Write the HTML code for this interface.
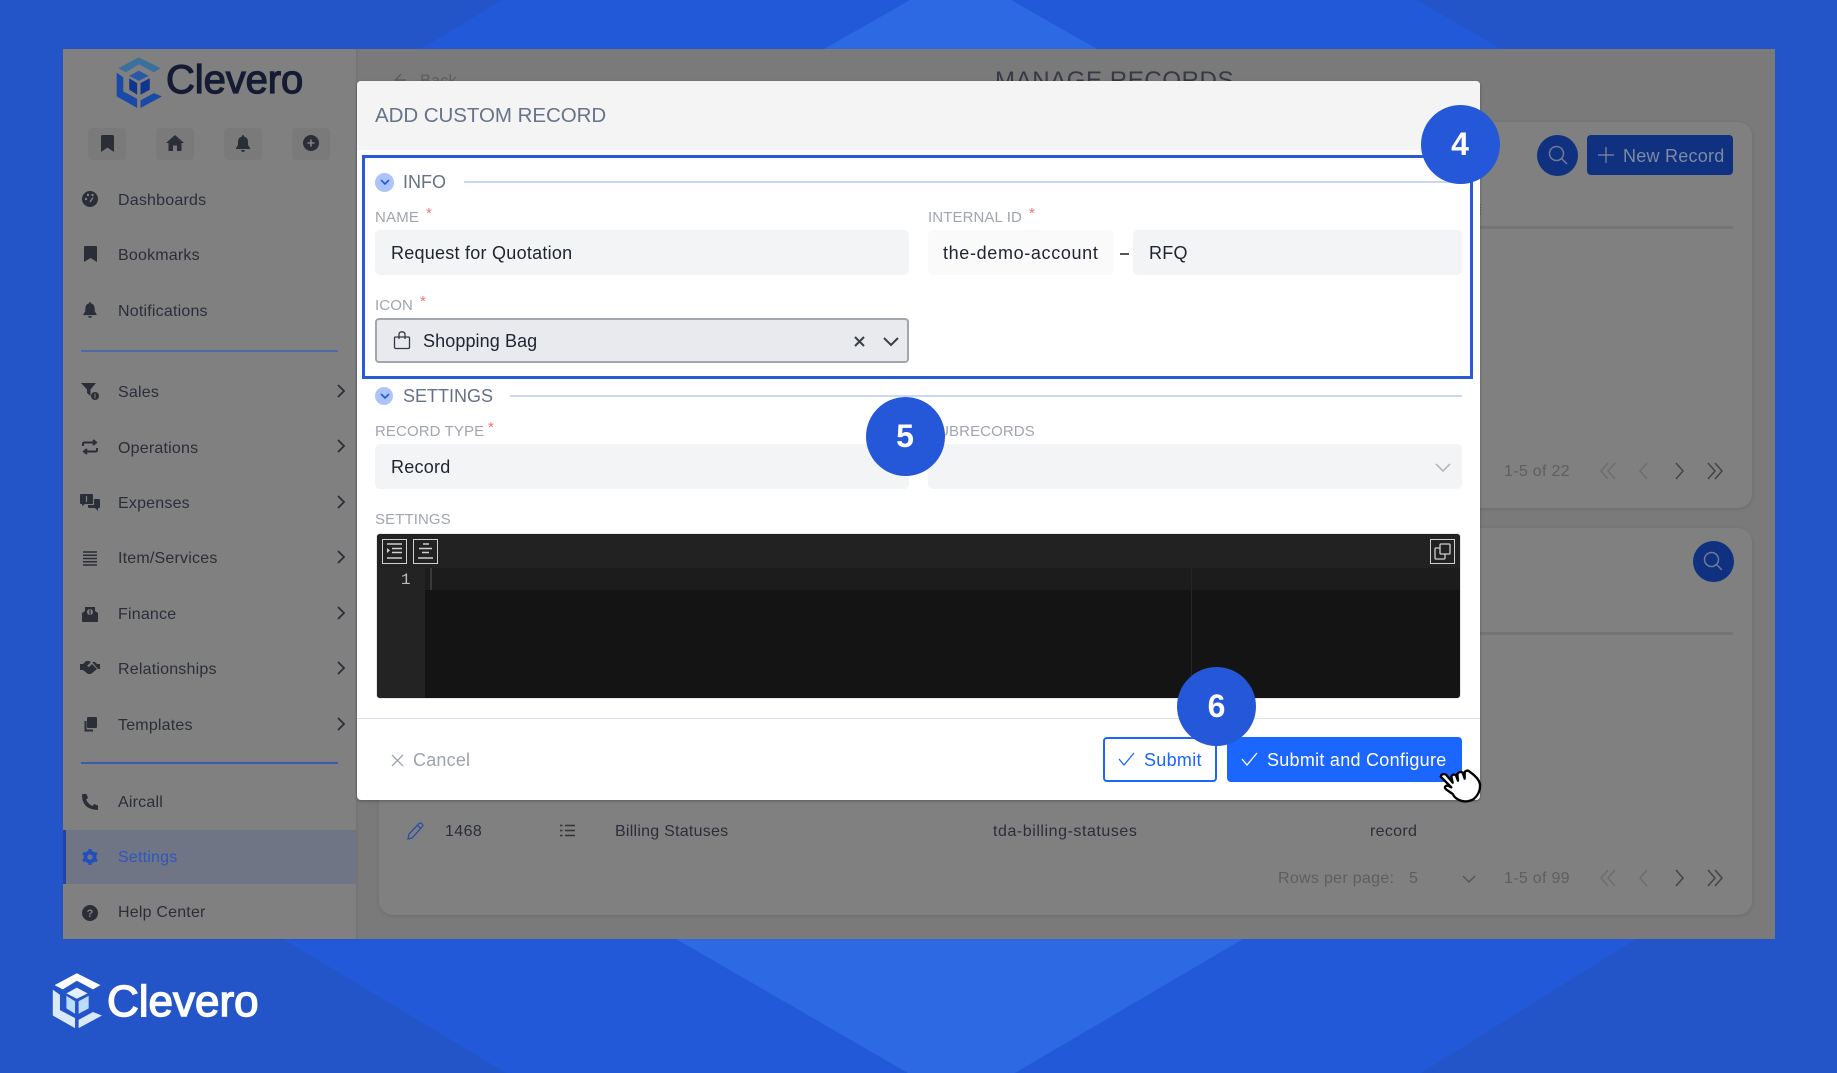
<!DOCTYPE html>
<html><head><meta charset="utf-8"><title>Clevero</title>
<style>
*{box-sizing:border-box}
html,body{margin:0;padding:0;width:1837px;height:1073px;overflow:hidden;background:#2455c8;font-family:"Liberation Sans",sans-serif}
.a{position:absolute}
.t{position:absolute;white-space:nowrap;line-height:1}
.nav{font-size:16px;letter-spacing:.2px;color:#2a2e37;left:118px}
.lab{font-size:15px;color:#a1a5ad;letter-spacing:.1px}
.req{font-size:15px;color:#f87171}
.inp{position:absolute;background:#f3f4f6;border-radius:5px;height:45px}
.val{font-size:18px;color:#1f2430;letter-spacing:.25px}
.circ{position:absolute;width:79px;height:79px;border-radius:50%;background:#2558d8;color:#fff;font-weight:bold;font-size:32px;text-align:center;line-height:79px;z-index:20}
.sec{font-size:18px;color:#657185;letter-spacing:0}
.pg{font-size:16px;color:#5e5e5e;letter-spacing:.3px}
.tb{position:absolute;border:1.5px solid #d0d0d0;width:25px;height:25px}
svg{position:absolute;overflow:visible}
.ic{fill:#2a2e37}
.sb{position:absolute;background:#7a7a7a;border-radius:4px;width:38px;height:32px;top:128px}
</style></head><body>

<svg style="left:0;top:0" width="1837" height="1073">
<polygon points="502,0 1417,0 1501,49 1636,939 1421,1073 506,1073 283,939 421,49" fill="#2259d8"/>
<polygon points="910,0 1011,0 1097,49 1243,939 1015,1073 908,1073 676,939 824,49" fill="#2c69e2"/>
</svg>

<!-- app frame -->
<div class="a" style="left:63px;top:49px;width:1712px;height:890px;background:#7a7a7a;overflow:hidden"></div>
<!-- sidebar -->
<div class="a" style="left:63px;top:49px;width:293px;height:890px;background:#808080;box-shadow:1px 0 3px rgba(0,0,0,.08)"></div>

<svg style="left:115px;top:56px" width="48" height="53" viewBox="345 168 145 160">
<polygon points="355,205 417,172 483,205 462,217 417,193 378,217" fill="#3a6f9e"/>
<polygon points="350,218 350,290 412,325 412,297 370,275 370,232" fill="#1a4aa8"/>
<polygon points="422,325 487,290 462,280 422,302" fill="#1a4aa8"/>
<polygon points="417,212 447,228 417,243 388,228" fill="#2a58a8"/>
<polygon points="388,235 412,250 412,285 388,270" fill="#0e3590"/>
<polygon points="422,250 450,235 450,270 422,285" fill="#0e3590"/>
</svg>
<div class="t" style="left:166px;top:60px;font-size:40px;color:#141b33;-webkit-text-stroke:1.200px #141b33;letter-spacing:-.1px">Clevero</div>

<div class="sb" style="left:88px"></div><div class="sb" style="left:156px"></div><div class="sb" style="left:224px"></div><div class="sb" style="left:292px"></div>
<svg style="left:101px;top:135px" width="13" height="17" viewBox="0 0 13 17"><path class="ic" d="M0 1.5Q0 0 1.5 0H11.500Q13 0 13 1.500V17L6.500 12.500L0 17Z"/></svg>
<svg style="left:166px;top:135px" width="18" height="16" viewBox="0 0 18 16"><path class="ic" d="M9 0L18 8H15.500V16H11V10.500H7V16H2.500V8H0Z"/></svg>
<svg style="left:236px;top:135px" width="14" height="17" viewBox="0 0 14 17"><path class="ic" d="M7 0Q8 0 8 1.500Q12 2.500 12 7V10L14 13V14H0V13L2 10V7Q2 2.500 6 1.500Q6 0 7 0ZM5 15H9Q8.500 17 7 17Q5.500 17 5 15Z"/></svg>
<svg style="left:303px;top:135px" width="16" height="16" viewBox="0 0 16 16"><circle class="ic" cx="8" cy="8" r="8"/><path d="M8 4.500V11.500M4.500 8H11.500" stroke="#808080" stroke-width="1.600"/></svg>

<div class="t nav" style="top:193px">Dashboards</div>
<div class="t nav" style="top:248px">Bookmarks</div>
<div class="t nav" style="top:304px">Notifications</div>
<div class="t nav" style="top:385px">Sales</div>
<div class="t nav" style="top:441px">Operations</div>
<div class="t nav" style="top:496px">Expenses</div>
<div class="t nav" style="top:551px">Item/Services</div>
<div class="t nav" style="top:607px">Finance</div>
<div class="t nav" style="top:662px">Relationships</div>
<div class="t nav" style="top:718px">Templates</div>
<div class="t nav" style="top:795px">Aircall</div>
<div class="a" style="left:63px;top:830px;width:293px;height:54px;background:#6f7584;border-left:3px solid #1f45a8"></div>
<div class="t nav" style="top:850px;color:#2c56c0">Settings</div>
<div class="t nav" style="top:905px">Help Center</div>

<div class="a" style="left:81px;top:350px;width:257px;height:2px;background:#4c6aa6"></div>
<div class="a" style="left:81px;top:762px;width:257px;height:1.500px;background:#3a5cae"></div>

<!-- sidebar icons -->
<svg style="left:82px;top:191px" width="16" height="16" viewBox="0 0 16 16"><circle class="ic" cx="8" cy="8" r="8"/><circle cx="4" cy="8" r="1.200" fill="#808080"/><circle cx="6" cy="4" r="1.200" fill="#808080"/><circle cx="10.500" cy="4" r="1.200" fill="#808080"/><path d="M8 11L11 6.500" stroke="#808080" stroke-width="1.500"/></svg>
<svg style="left:83.500px;top:246px" width="13" height="16" viewBox="0 0 13 16"><path class="ic" d="M0 1Q0 0 1 0H12Q13 0 13 1V16L6.500 12L0 16Z"/></svg>
<svg style="left:83px;top:302px" width="14" height="16" viewBox="0 0 14 17"><path class="ic" d="M7 0Q8 0 8 1.500Q12 2.500 12 7V10L14 13V14H0V13L2 10V7Q2 2.500 6 1.500Q6 0 7 0ZM5 15H9Q8.500 17 7 17Q5.500 17 5 15Z"/></svg>
<svg style="left:81px;top:383px" width="18" height="17" viewBox="0 0 18 17"><path class="ic" d="M0 0H15L9.500 6.500V13L6 10V6.500Z"/><circle class="ic" cx="14" cy="13" r="4"/><path d="M14 10.500V15.500" stroke="#808080" stroke-width="1"/></svg>
<svg style="left:82px;top:439px" width="16" height="16" viewBox="0 0 16 16"><path d="M1 7V5Q1 3.500 2.500 3.500H13M11 1L14 3.500L11 6M15 9V11Q15 12.500 13.500 12.500H3M5 10L2 12.500L5 15" fill="none" stroke="#2a2e37" stroke-width="2"/></svg>
<svg style="left:80px;top:494px" width="20" height="17" viewBox="0 0 20 17"><path class="ic" d="M1 0H12Q13 0 13 1V9Q13 10 12 10H5L2 12V10H1Q0 10 0 9V1Q0 0 1 0Z"/><path class="ic" d="M14 5H19Q20 5 20 6V13Q20 14 19 14H18V17L15 14H9Q8 14 8 13V11H14Z"/><path d="M6.500 2V8" stroke="#808080" stroke-width="1.200"/></svg>
<svg style="left:83px;top:551px" width="14" height="15" viewBox="0 0 14 15"><path d="M0 1H14M0 4.250H14M0 7.500H14M0 10.750H14M0 14H14" stroke="#2a2e37" stroke-width="1.500"/></svg>
<svg style="left:82px;top:606px" width="16" height="16" viewBox="0 0 16 16"><path class="ic" d="M0 7L3 5V1H13V5L16 7V15Q16 16 15 16H1Q0 16 0 15Z"/><circle cx="8" cy="6" r="3" fill="#808080"/><path d="M8 3.500V8.500" stroke="#2a2e37" stroke-width="1.200"/></svg>
<svg style="left:80px;top:661px" width="20" height="13" viewBox="0 0 20 13"><path class="ic" d="M0 3H3L6 0H9L11 1L7 5L9 6L12 3L17 8L11 13H8L3 9H0ZM12 1H15L17 3H20V8H18L13 2Z"/></svg>
<svg style="left:83px;top:717px" width="14" height="16" viewBox="0 0 14 16"><path class="ic" d="M5 0H13Q14 0 14 1V10Q14 11 13 11H5Q4 11 4 10V1Q4 0 5 0Z"/><path d="M2.500 4V13.500H10" fill="none" stroke="#2a2e37" stroke-width="2"/></svg>
<svg style="left:82px;top:794px" width="16" height="16" viewBox="0 0 16 16"><path class="ic" d="M1 0L4.500 0L6 4L4 5.500Q6 10 10.500 12L12 10L16 11.500V15Q16 16 15 16Q0 15 0 1Q0 0 1 0Z"/></svg>
<svg style="left:82px;top:849px" width="16" height="16" viewBox="0 0 16 16"><path d="M8 3.500A4.500 4.500 0 1 0 8 12.500A4.500 4.500 0 1 0 8 3.500Z" fill="none" stroke="#2150be" stroke-width="3.800"/><path d="M8 0V3M8 13V16M1 4L3.500 5.500M12.500 10.500L15 12M1 12L3.500 10.500M12.500 5.500L15 4" stroke="#2150be" stroke-width="3.200"/></svg>
<svg style="left:82px;top:905px" width="16" height="16" viewBox="0 0 16 16"><circle class="ic" cx="8" cy="8" r="8"/><text x="8" y="12" font-size="11" font-weight="bold" text-anchor="middle" fill="#808080" font-family="Liberation Sans">?</text></svg>

<!-- sidebar chevrons -->
<svg style="left:337px;top:384px" width="8" height="360" viewBox="0 0 8 360"><g fill="none" stroke="#2a2e37" stroke-width="1.800"><path d="M1 1L7 7L1 13"/><path d="M1 56L7 62L1 68"/><path d="M1 112L7 118L1 124"/><path d="M1 167L7 173L1 179"/><path d="M1 223L7 229L1 235"/><path d="M1 278L7 284L1 290"/><path d="M1 334L7 340L1 346"/></g></svg>

<!-- background page -->
<div class="t" style="left:420px;top:73px;font-size:16.500px;color:#5a5e64">Back</div>
<svg style="left:394px;top:73px" width="14" height="14"><path d="M12 7H2M7 1L1.500 7L7 13" fill="none" stroke="#5a5e64" stroke-width="1.500"/></svg>
<div class="t" style="left:995px;top:69px;font-size:24px;color:#353a44;letter-spacing:.6px">MANAGE RECORDS</div>

<div class="a" style="left:379px;top:122px;width:1373px;height:386px;background:#808080;border-radius:14px;box-shadow:0 1px 4px rgba(0,0,0,.12)"></div>
<div class="a" style="left:379px;top:528px;width:1373px;height:387px;background:#808080;border-radius:14px;box-shadow:0 1px 4px rgba(0,0,0,.12)"></div>

<div class="a" style="left:1537px;top:135px;width:41px;height:41px;border-radius:50%;background:#0f3180"></div>
<svg style="left:1548px;top:145px" width="21" height="21" fill="none" stroke="#6f7a94" stroke-width="1.500"><circle cx="8.500" cy="8.500" r="7"/><path d="M13.500 13.500L19 19"/></svg>
<div class="a" style="left:1587px;top:135px;width:146px;height:40px;background:#0f3180;border-radius:4px"></div>
<svg style="left:1598px;top:147px" width="16" height="16" stroke="#7f8aa3" stroke-width="1.200"><path d="M8 0V16M0 8H16"/></svg>
<div class="t" style="left:1623px;top:147px;font-size:18px;color:#7f8aa3;letter-spacing:.25px">New Record</div>
<div class="a" style="left:1478px;top:204px;width:3px;height:12px;background-image:linear-gradient(#666 50%,transparent 50%);background-size:3px 3px"></div>
<div class="a" style="left:1480px;top:226px;width:253px;height:3px;background:#747474"></div>

<div class="t pg" style="left:1504px;top:464px">1-5 of 22</div>
<svg style="left:1600px;top:462px" width="125" height="18" fill="none" stroke-width="1.500"><path d="M8 1L1 9L8 17M15 1L8 9L15 17M47 1L40 9L47 17" stroke="#6d6d6d"/><path d="M76 1L83 9L76 17M108 1L115 9L108 17M115 1L122 9L115 17" stroke="#444"/></svg>

<div class="a" style="left:1693px;top:541px;width:41px;height:41px;border-radius:50%;background:#0f3180"></div>
<svg style="left:1703px;top:551px" width="21" height="21" fill="none" stroke="#6f7a94" stroke-width="1.500"><circle cx="8.500" cy="8.500" r="7"/><path d="M13.500 13.500L19 19"/></svg>
<div class="a" style="left:1480px;top:632px;width:253px;height:3px;background:#747474"></div>

<svg style="left:407px;top:822px" width="17" height="18" fill="none" stroke="#2a4f9f" stroke-width="1.300"><path d="M1 17L2 12L12 1.500Q13.500 .5 15 2Q16.500 3.500 15 5L5 16Z"/><path d="M10.500 3.500L13.500 6.500"/></svg>
<div class="t" style="left:445px;top:824px;font-size:16px;color:#2a2e37;letter-spacing:.4px">1468</div>
<svg style="left:560px;top:824px" width="15" height="13" stroke="#333" stroke-width="1.500"><path d="M0 1.500H2.500M0 6.500H2.500M0 11.500H2.500M5 1.500H15M5 6.500H15M5 11.500H15"/></svg>
<div class="t" style="left:615px;top:824px;font-size:16px;color:#2a2e37;letter-spacing:.25px">Billing Statuses</div>
<div class="t" style="left:993px;top:824px;font-size:16px;color:#2a2e37;letter-spacing:.55px">tda-billing-statuses</div>
<div class="t" style="left:1370px;top:824px;font-size:16px;color:#2a2e37;letter-spacing:.3px">record</div>

<div class="t pg" style="left:1278px;top:871px">Rows per page:</div>
<div class="t pg" style="left:1409px;top:871px">5</div>
<svg style="left:1462px;top:875px" width="14" height="8" fill="none" stroke="#555" stroke-width="1.500"><path d="M1 1L7 7L13 1"/></svg>
<div class="t pg" style="left:1504px;top:871px">1-5 of 99</div>
<svg style="left:1600px;top:869px" width="125" height="18" fill="none" stroke-width="1.500"><path d="M8 1L1 9L8 17M15 1L8 9L15 17M47 1L40 9L47 17" stroke="#6d6d6d"/><path d="M76 1L83 9L76 17M108 1L115 9L108 17M115 1L122 9L115 17" stroke="#444"/></svg>

<!-- modal -->
<div class="a" style="left:357px;top:81px;width:1123px;height:719px;background:#fff;border-radius:4px;box-shadow:0 1px 3px rgba(0,0,0,.3);overflow:hidden">
 <div style="height:69px;background:#f4f4f4"></div>
</div>
<div class="t" style="left:375px;top:106px;font-size:20.500px;color:#667388;letter-spacing:-.05px">ADD CUSTOM RECORD</div>

<!-- highlight -->
<div class="a" style="left:362px;top:155px;width:1111px;height:224px;border:3.500px solid #2a5bd7;z-index:5"></div>

<!-- INFO section -->
<div class="a" style="left:375px;top:173px;width:19px;height:19px;border-radius:50%;background:#adc4fb"></div>
<svg style="left:380px;top:179px" width="10" height="7" fill="none" stroke="#2158e0" stroke-width="1.600"><path d="M1 1L5 5L9 1"/></svg>
<div class="t sec" style="left:403px;top:173px">INFO</div>
<div class="a" style="left:464px;top:181px;width:998px;height:2px;background:#c9d7f6"></div>

<div class="t lab" style="left:375px;top:210px;letter-spacing:.2px">NAME</div><div class="t req" style="left:426px;top:206px">*</div>
<div class="inp" style="left:375px;top:230px;width:534px"></div>
<div class="t val" style="left:391px;top:244px">Request for Quotation</div>

<div class="t lab" style="left:928px;top:210px">INTERNAL ID</div><div class="t req" style="left:1029px;top:206px">*</div>
<div class="inp" style="left:928px;top:230px;width:186px;background:#fafafa"></div>
<div class="t val" style="left:943px;top:244px;letter-spacing:.65px">the-demo-account</div>
<div class="a" style="left:1120px;top:253px;width:9px;height:1.500px;background:#555"></div>
<div class="inp" style="left:1133px;top:230px;width:329px"></div>
<div class="t val" style="left:1149px;top:244px">RFQ</div>

<div class="t lab" style="left:375px;top:298px">ICON</div><div class="t req" style="left:420px;top:294px">*</div>
<div class="a" style="left:375px;top:318px;width:534px;height:45px;background:#e9eaee;border:2px solid #a2a6ad;border-radius:4px"></div>
<svg style="left:394px;top:331px" width="16" height="18" fill="none" stroke="#333a45" stroke-width="1.300"><path d="M1.500 6H14.500Q15.500 6 15.500 7V16Q15.500 17.500 14 17.500H2Q.5 17.500 .5 16V7Q.5 6 1.500 6ZM5 8V3.500Q5 .8 8 .8Q11 .8 11 3.500V8"/></svg>
<div class="t val" style="left:423px;top:332px;letter-spacing:.1px">Shopping Bag</div>
<svg style="left:854px;top:336px" width="11" height="11" stroke="#3a3f48" stroke-width="2"><path d="M1 1L10 10M10 1L1 10"/></svg>
<svg style="left:883px;top:337px" width="16" height="10" fill="none" stroke="#3a3f48" stroke-width="2"><path d="M1 1L8 8L15 1"/></svg>

<!-- SETTINGS section -->
<div class="a" style="left:375px;top:387px;width:18px;height:18px;border-radius:50%;background:#adc4fb"></div>
<svg style="left:379.500px;top:393px" width="10" height="7" fill="none" stroke="#2158e0" stroke-width="1.600"><path d="M1 1L5 5L9 1"/></svg>
<div class="t sec" style="left:403px;top:387px">SETTINGS</div>
<div class="a" style="left:510px;top:395px;width:952px;height:2px;background:#c9d7f6"></div>

<div class="t lab" style="left:375px;top:424px">RECORD TYPE</div><div class="t req" style="left:488px;top:420px">*</div>
<div class="inp" style="left:375px;top:444px;width:534px"></div>
<div class="t val" style="left:391px;top:458px">Record</div>

<div class="t lab" style="left:928px;top:424px">SUBRECORDS</div>
<div class="inp" style="left:928px;top:444px;width:534px"></div>
<svg style="left:1435px;top:463px" width="16" height="10" fill="none" stroke="#b5b8bf" stroke-width="1.600"><path d="M1 1L8 8L15 1"/></svg>

<div class="t lab" style="left:375px;top:512px">SETTINGS</div>

<!-- editor -->
<div class="a" style="left:377px;top:534px;width:1083px;height:164px;background:#141414;border-radius:3px;overflow:hidden;box-shadow:0 0 1px #666">
 <div class="a" style="left:0;top:0;width:100%;height:34px;background:#222"></div>
 <div class="a" style="left:0;top:34px;width:100%;height:22px;background:#1c1c1c"></div>
 <div class="a" style="left:0;top:34px;width:48px;height:130px;background:#232323"></div>
 <div class="a" style="left:814px;top:34px;width:1px;height:130px;background:#252525"></div>
 <div class="a" style="left:53px;top:34px;width:2px;height:22px;background:#3a3a3a"></div>
</div>
<div class="tb" style="left:382px;top:539px"></div>
<svg style="left:385px;top:543px" width="19" height="17" stroke="#cfcfcf" stroke-width="1.500"><path d="M2 1H17M7 5.500H17M7 9.500H17M2 15H17"/><path d="M2 5L5 7.500L2 10Z" fill="#cfcfcf" stroke="none"/></svg>
<div class="tb" style="left:413px;top:539px"></div>
<svg style="left:416px;top:543px" width="19" height="17" stroke="#cfcfcf" stroke-width="1.500"><path d="M7 1H13M3 5.500H16M6 9.500H13M2 15H17"/></svg>
<div class="tb" style="left:1430px;top:539px"></div>
<svg style="left:1434px;top:543px" width="17" height="17" fill="none" stroke="#cfcfcf" stroke-width="1.300"><rect x="6" y="1" width="10" height="10" rx="1"/><path d="M6 5H2Q1 5 1 6V15Q1 16 2 16H10Q11 16 11 15V11"/></svg>
<div class="t" style="left:401px;top:572px;font-family:'Liberation Mono',monospace;font-size:16px;color:#bdbdbd">1</div>

<!-- footer -->
<div class="a" style="left:357px;top:718px;width:1123px;height:1px;background:#dbe1ea"></div>
<svg style="left:391px;top:754px" width="13" height="13" stroke="#9ca3af" stroke-width="1.300"><path d="M1 1L12 12M12 1L1 12"/></svg>
<div class="t" style="left:413px;top:751px;font-size:18px;color:#9ca3af;letter-spacing:.2px">Cancel</div>

<div class="a" style="left:1103px;top:737px;width:114px;height:45px;border:2px solid #1a66ff;border-radius:4px;background:#fff"></div>
<svg style="left:1118px;top:752px" width="17" height="14" fill="none" stroke="#1a66ff" stroke-width="1.300"><path d="M1 7L6 13L16 1"/></svg>
<div class="t" style="left:1144px;top:751px;font-size:18px;color:#1a66ff;letter-spacing:.3px">Submit</div>
<div class="a" style="left:1227px;top:737px;width:235px;height:45px;background:#1a66ff;border-radius:4px"></div>
<svg style="left:1241px;top:752px" width="17" height="14" fill="none" stroke="#fff" stroke-width="1.300"><path d="M1 7L6 13L16 1"/></svg>
<div class="t" style="left:1267px;top:751px;font-size:18px;color:#fff;letter-spacing:.27px">Submit and Configure</div>

<!-- hand -->
<svg style="left:1420px;top:750px;z-index:25" width="80" height="60" viewBox="0 0 240 180"><path d="M62 80Q66 68 78 74L98 98L94 80Q98 70 108 76L114 92L112 72Q118 62 128 68L134 86L134 66Q142 58 150 66Q176 84 180 102Q182 130 160 148Q140 158 122 152Q105 146 98 132L78 118Q70 110 82 106L94 112Z" fill="#fff" stroke="#000" stroke-width="7" stroke-linejoin="round"/></svg>

<!-- badges -->
<div class="circ" style="left:1420.500px;top:104.500px">4</div>
<div class="circ" style="left:865.500px;top:396.500px">5</div>
<div class="circ" style="left:1177px;top:667px">6</div>

<!-- bottom logo -->
<svg style="left:51px;top:971px" width="52" height="59" viewBox="345 168 145 160">
<polygon points="355,205 417,172 483,205 462,217 417,193 378,217" fill="#fff"/>
<polygon points="350,218 350,290 412,325 412,297 370,275 370,232" fill="#dbe9ff"/>
<polygon points="422,325 487,290 462,280 422,302" fill="#dbe9ff"/>
<polygon points="417,212 447,228 417,243 388,228" fill="#e6f1ff"/>
<polygon points="388,235 412,250 412,285 388,270" fill="#bcdcff"/>
<polygon points="422,250 450,235 450,270 422,285" fill="#bcdcff"/>
</svg>
<div class="t" style="left:107px;top:980px;font-size:44px;color:#fff;-webkit-text-stroke:1.400px #fff">Clevero</div>

</body></html>
